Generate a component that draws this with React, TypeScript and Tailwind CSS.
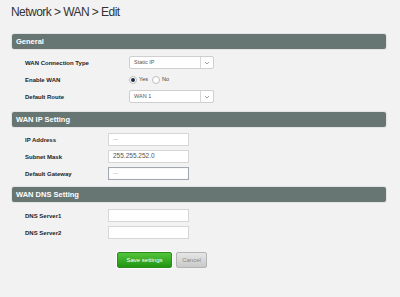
import React from "react";

const labelCls = "text-[6px] font-bold text-[#222] leading-none";

function SectionHeader({ title }: { title: string }) {
  return (
    <div className="h-[15px] w-[374px] rounded-[2px] bg-[#677673] flex items-center pl-[4px] shadow-[0_0_0_1px_#e4e4e4]">
      <span className="text-[7.5px] font-bold text-white leading-none">{title}</span>
    </div>
  );
}

function Select({ value }: { value: string }) {
  return (
    <div className="w-[85px] h-[13px] bg-white border border-[#cfcfcf] rounded-[2px] flex items-center">
      <span className="flex-1 pl-[4px] text-[5.5px] text-[#555] leading-none">{value}</span>
      <div className="w-[13px] h-full border-l border-[#d8d8d8] flex items-center justify-center">
        <svg width="6" height="4" viewBox="0 0 6 4">
          <path d="M1 1 L3 3 L5 1" fill="none" stroke="#8a8a8a" strokeWidth="0.8" />
        </svg>
      </div>
    </div>
  );
}

function TextInput({ value, focus }: { value?: string; focus?: boolean }) {
  return (
    <div
      className={
        focus
          ? "w-[81px] h-[13px] bg-white border border-[#a3a7b3] flex items-center pl-[4px] shadow-[inset_0_0_1px_#c0c4cc]"
          : "w-[81px] h-[13px] bg-white border border-[#d6d6d6] flex items-center pl-[4px]"
      }
    >
      <span className={value === "---" ? "text-[5px] text-[#999] leading-none" : "text-[6.5px] text-[#555] leading-none"}>
        {value}
      </span>
    </div>
  );
}

export default function App() {
  return (
    <div
      className="w-[400px] h-[297px] bg-[#f2f2f2] pl-[12px] pt-[5px]"
      style={{ fontFamily: '"Liberation Sans", Arial, sans-serif' }}
    >
      <h1 className="pl-[-1px] -ml-[1px] text-[12px] leading-[15px] text-[#333] tracking-[-0.55px] font-normal">
        Network &gt; WAN &gt; Edit
      </h1>

      <div className="mt-[14px]">
        <SectionHeader title="General" />
        <div className="flex flex-col gap-[4px] mt-[7px] pl-[13px]">
          <div className="flex items-center h-[13px]">
            <span className={`${labelCls} w-[104px]`}>WAN Connection Type</span>
            <Select value="Static IP" />
          </div>
          <div className="flex items-center h-[13px]">
            <span className={`${labelCls} w-[104px]`}>Enable WAN</span>
            <div className="flex items-center gap-[2px]">
              <div className="w-[8px] h-[8px] rounded-full bg-white border border-[#bdbdbd] flex items-center justify-center">
                <div className="w-[4px] h-[4px] rounded-full bg-[#1d2a4a]" />
              </div>
              <span className="text-[5.5px] text-[#444] leading-none mr-[2px]">Yes</span>
              <div className="w-[8px] h-[8px] rounded-full bg-white border border-[#bdbdbd]" />
              <span className="text-[5.5px] text-[#444] leading-none">No</span>
            </div>
          </div>
          <div className="flex items-center h-[13px]">
            <span className={`${labelCls} w-[104px]`}>Default Route</span>
            <Select value="WAN 1" />
          </div>
        </div>
      </div>

      <div className="mt-[9px]">
        <SectionHeader title="WAN IP Setting" />
        <div className="flex flex-col gap-[4px] mt-[6px] pl-[13px]">
          <div className="flex items-center h-[13px]">
            <span className={`${labelCls} w-[83px]`}>IP Address</span>
            <TextInput value="---" />
          </div>
          <div className="flex items-center h-[13px]">
            <span className={`${labelCls} w-[83px]`}>Subnet Mask</span>
            <TextInput value="255.255.252.0" />
          </div>
          <div className="flex items-center h-[13px]">
            <span className={`${labelCls} w-[83px]`}>Default Gateway</span>
            <TextInput value="---" focus />
          </div>
        </div>
      </div>

      <div className="mt-[7px]">
        <SectionHeader title="WAN DNS Setting" />
        <div className="flex flex-col gap-[4px] mt-[7px] pl-[13px]">
          <div className="flex items-center h-[13px]">
            <span className={`${labelCls} w-[83px]`}>DNS Server1</span>
            <TextInput />
          </div>
          <div className="flex items-center h-[13px]">
            <span className={`${labelCls} w-[83px]`}>DNS Server2</span>
            <TextInput />
          </div>
        </div>
      </div>

      <div className="flex gap-[4px] mt-[13px] pl-[105px]">
        <button className="w-[55px] h-[16px] rounded-[2px] border border-[#2f8a1e] bg-gradient-to-b from-[#52c53a] to-[#1e9410] text-white text-[6px] leading-none shadow-[0_0_0_1px_#ffffff]">
          Save settings
        </button>
        <button className="w-[31px] h-[16px] rounded-[2px] border border-[#b4b4b4] bg-gradient-to-b from-[#e6e6e6] to-[#c9c9c9] text-[#888] text-[6px] leading-none">
          Cancel
        </button>
      </div>
    </div>
  );
}
